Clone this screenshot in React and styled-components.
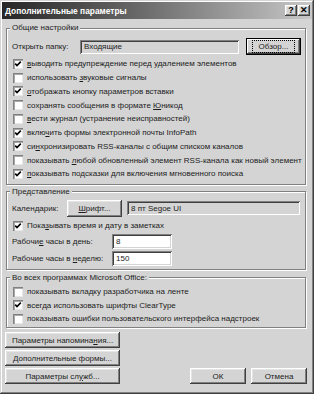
import React from 'react';
import styled, { createGlobalStyle } from 'styled-components';

const GlobalStyle = createGlobalStyle`
  html, body {
    margin: 0;
    padding: 0;
    background: #d4d4d4;
  }
  body {
    font-family: "Liberation Sans", Arial, sans-serif;
    font-size: 8px;
    color: #1c1c1c;
  }
`;

const raised = `
  box-shadow: inset -1px -1px #404040, inset 1px 1px #ffffff, inset -2px -2px #808080, inset 2px 2px #e4e4e4;
`;

const sunken = `
  box-shadow: inset 1px 1px #808080, inset -1px -1px #ffffff, inset 2px 2px #404040, inset -2px -2px #d4d4d4;
`;

const Window = styled.div`
  width: 314px;
  height: 394px;
  box-sizing: border-box;
  padding: 2px;
  background: #d4d4d4;
  box-shadow: inset -1px -1px #404040, inset 1px 1px #d4d4d4, inset -2px -2px #808080, inset 2px 2px #ffffff;
  display: flex;
  flex-direction: column;
`;

const TitleBar = styled.div`
  height: 17px;
  display: flex;
  align-items: center;
  padding: 0 2px 0 3px;
  background: linear-gradient(to right, #262626 0%, #6a6a6a 45%, #c8c8c8 100%);
  color: #ffffff;
  font-weight: bold;
  font-size: 8.4px;
`;

const TitleText = styled.div`
  flex: 1;
  white-space: nowrap;
`;

const TitleButton = styled.div`
  width: 12px;
  height: 11px;
  margin-left: ${p => p.$gap || 0}px;
  box-sizing: border-box;
  background: #d4d4d4;
  ${raised}
  color: #000;
  font-size: 9px;
  font-weight: bold;
  line-height: 11px;
  text-align: center;
`;

const Body = styled.div`
  flex: 1;
  display: flex;
  flex-direction: column;
  padding: 2px 5px 0 3px;
`;

const Group = styled.fieldset`
  margin: ${p => p.$top || 2}px 1px 0 1px;
  padding: ${p => p.$pad};
  border: 1px solid #808080;
  box-shadow: inset 1px 1px #ffffff, 1px 1px #ffffff;
  min-inline-size: 0;
`;

const Legend = styled.legend`
  padding: 0 2px;
  margin-left: -2px;
  line-height: 10px;
  background: #d4d4d4;
`;

const Row = styled.div`
  display: flex;
  align-items: center;
  height: ${p => p.$h || 17}px;
  margin-top: ${p => p.$mt || 0}px;
`;

const Label = styled.div`
  width: ${p => p.$w}px;
  flex: none;
  white-space: nowrap;
`;

const Field = styled.div`
  width: ${p => p.$w}px;
  height: ${p => p.$h || 14}px;
  margin-left: ${p => p.$ml || 0}px;
  box-sizing: border-box;
  padding: 0 4px;
  background: ${p => (p.$white ? '#ffffff' : '#d4d4d4')};
  ${sunken}
  display: flex;
  align-items: center;
  white-space: nowrap;
`;

const Button = styled.div`
  width: ${p => p.$w}px;
  height: ${p => p.$h || 16}px;
  margin-left: ${p => p.$ml || 0}px;
  flex: none;
  box-sizing: border-box;
  background: #d4d4d4;
  ${raised}
  display: flex;
  align-items: center;
  justify-content: center;
  white-space: nowrap;
`;

const DefaultButton = styled(Button)`
  border: 1px solid #000;
  box-shadow: inset -1px -1px #404040, inset 1px 1px #ffffff, inset -2px -2px #808080;
`;

const Focus = styled.span`
  border: 1px dotted #000;
  padding: 1px 6px;
  line-height: 9px;
`;

const CheckRow = styled.div`
  display: flex;
  align-items: center;
  height: ${p => p.$h || 13.75}px;
  white-space: nowrap;
`;

const Box = styled.div`
  width: 10px;
  height: 10px;
  margin: 0 4px 0 1px;
  flex: none;
  box-sizing: border-box;
  background: #ffffff;
  box-shadow: inset 1px 1px #808080, inset 2px 2px #a8a8a8, inset -1px -1px #e8e8e8;
  display: flex;
  align-items: center;
  justify-content: center;
`;

const CheckList = styled.div`
  margin-top: 2px;
`;

const Footer = styled.div`
  display: flex;
  justify-content: space-between;
  align-items: flex-end;
  margin-top: 4px;
`;

const Stack = styled.div`
  display: flex;
  flex-direction: column;
  gap: 2px;
`;

const Pair = styled.div`
  display: flex;
`;

const Check = ({ on, children, h }) => (
  <CheckRow $h={h}>
    <Box>
      {on && (
        <svg width="8" height="8" viewBox="0 0 8 8">
          <path d="M1.2 3.6 L3 5.6 L6.8 1.6" fill="none" stroke="#000" strokeWidth="1.6" />
        </svg>
      )}
    </Box>
    <span>{children}</span>
  </CheckRow>
);

const App = () => (
  <>
    <GlobalStyle />
    <Window>
      <TitleBar>
        <TitleText>Дополнительные параметры</TitleText>
        <TitleButton>?</TitleButton>
        <TitleButton $gap={1}>✕</TitleButton>
      </TitleBar>
      <Body>
        <Group $pad="5px 4px 3px 5px">
          <Legend>Общие настройки</Legend>
          <Row>
            <Label $w={68}>Открыть папку:</Label>
            <Field $w={159}>Входящие</Field>
            <DefaultButton $w={55} $h={17} $ml={7}>
              <Focus>Обзор...</Focus>
            </DefaultButton>
          </Row>
          <CheckList>
            <Check on><u>в</u>ыводить предупреждение перед удалением элементов</Check>
            <Check>использовать <u>з</u>вуковые сигналы</Check>
            <Check on><u>о</u>тображать кнопку параметров вставки</Check>
            <Check>сохранять сообщения в формате <u>Ю</u>никод</Check>
            <Check><u>в</u>ести журнал (устранение неисправностей)</Check>
            <Check on>вклю<u>ч</u>ить формы электронной почты InfoPath</Check>
            <Check on>си<u>н</u>хронизировать RSS-каналы с общим списком каналов</Check>
            <Check>показывать <u>л</u>юбой обновленный элемент RSS-канала как новый элемент</Check>
            <Check on><u>п</u>оказывать подсказки для включения мгновенного поиска</Check>
          </CheckList>
        </Group>

        <Group $pad="3px 5px 3px 5px">
          <Legend>Представление</Legend>
          <Row>
            <Label $w={55}>Календарик:</Label>
            <Button $w={55} $h={17}><u>Ш</u>рифт...</Button>
            <Field $w={173} $ml={5}>8 пт Segoe UI</Field>
          </Row>
          <Row $h={14} $mt={2}>
            <Check on h={14}>Пока<u>з</u>ывать время и дату в заметках</Check>
          </Row>
          <Row $h={15} $mt={1}>
            <Label $w={100}>Рабочи<u>е</u> часы в день:</Label>
            <Field $w={60} $h={15} $white>8</Field>
          </Row>
          <Row $h={15} $mt={2}>
            <Label $w={100}>Рабочие часы в <u>н</u>еделю:</Label>
            <Field $w={60} $h={15} $white>150</Field>
          </Row>
        </Group>

        <Group $top={3} $pad="2px 5px 2px 5px">
          <Legend>Во всех программах Microsoft Office:</Legend>
          <Check h={13.5}>показывать вкладку разработчика на ленте</Check>
          <Check on h={13.5}>всегда использовать шрифты ClearType</Check>
          <Check h={13.5}>показывать ошибки пользовательского интерфейса надстроек</Check>
        </Group>

        <Footer>
          <Stack>
            <Button $w={115}>Параметры напомина<u>н</u>ия...</Button>
            <Button $w={115}>Дополнительные формы...</Button>
            <Button $w={115}>Параметры сл<u>у</u>жб...</Button>
          </Stack>
          <Pair>
            <Button $w={56}>ОК</Button>
            <Button $w={56} $ml={5}>Отмена</Button>
          </Pair>
        </Footer>
      </Body>
    </Window>
  </>
);

export default App;
